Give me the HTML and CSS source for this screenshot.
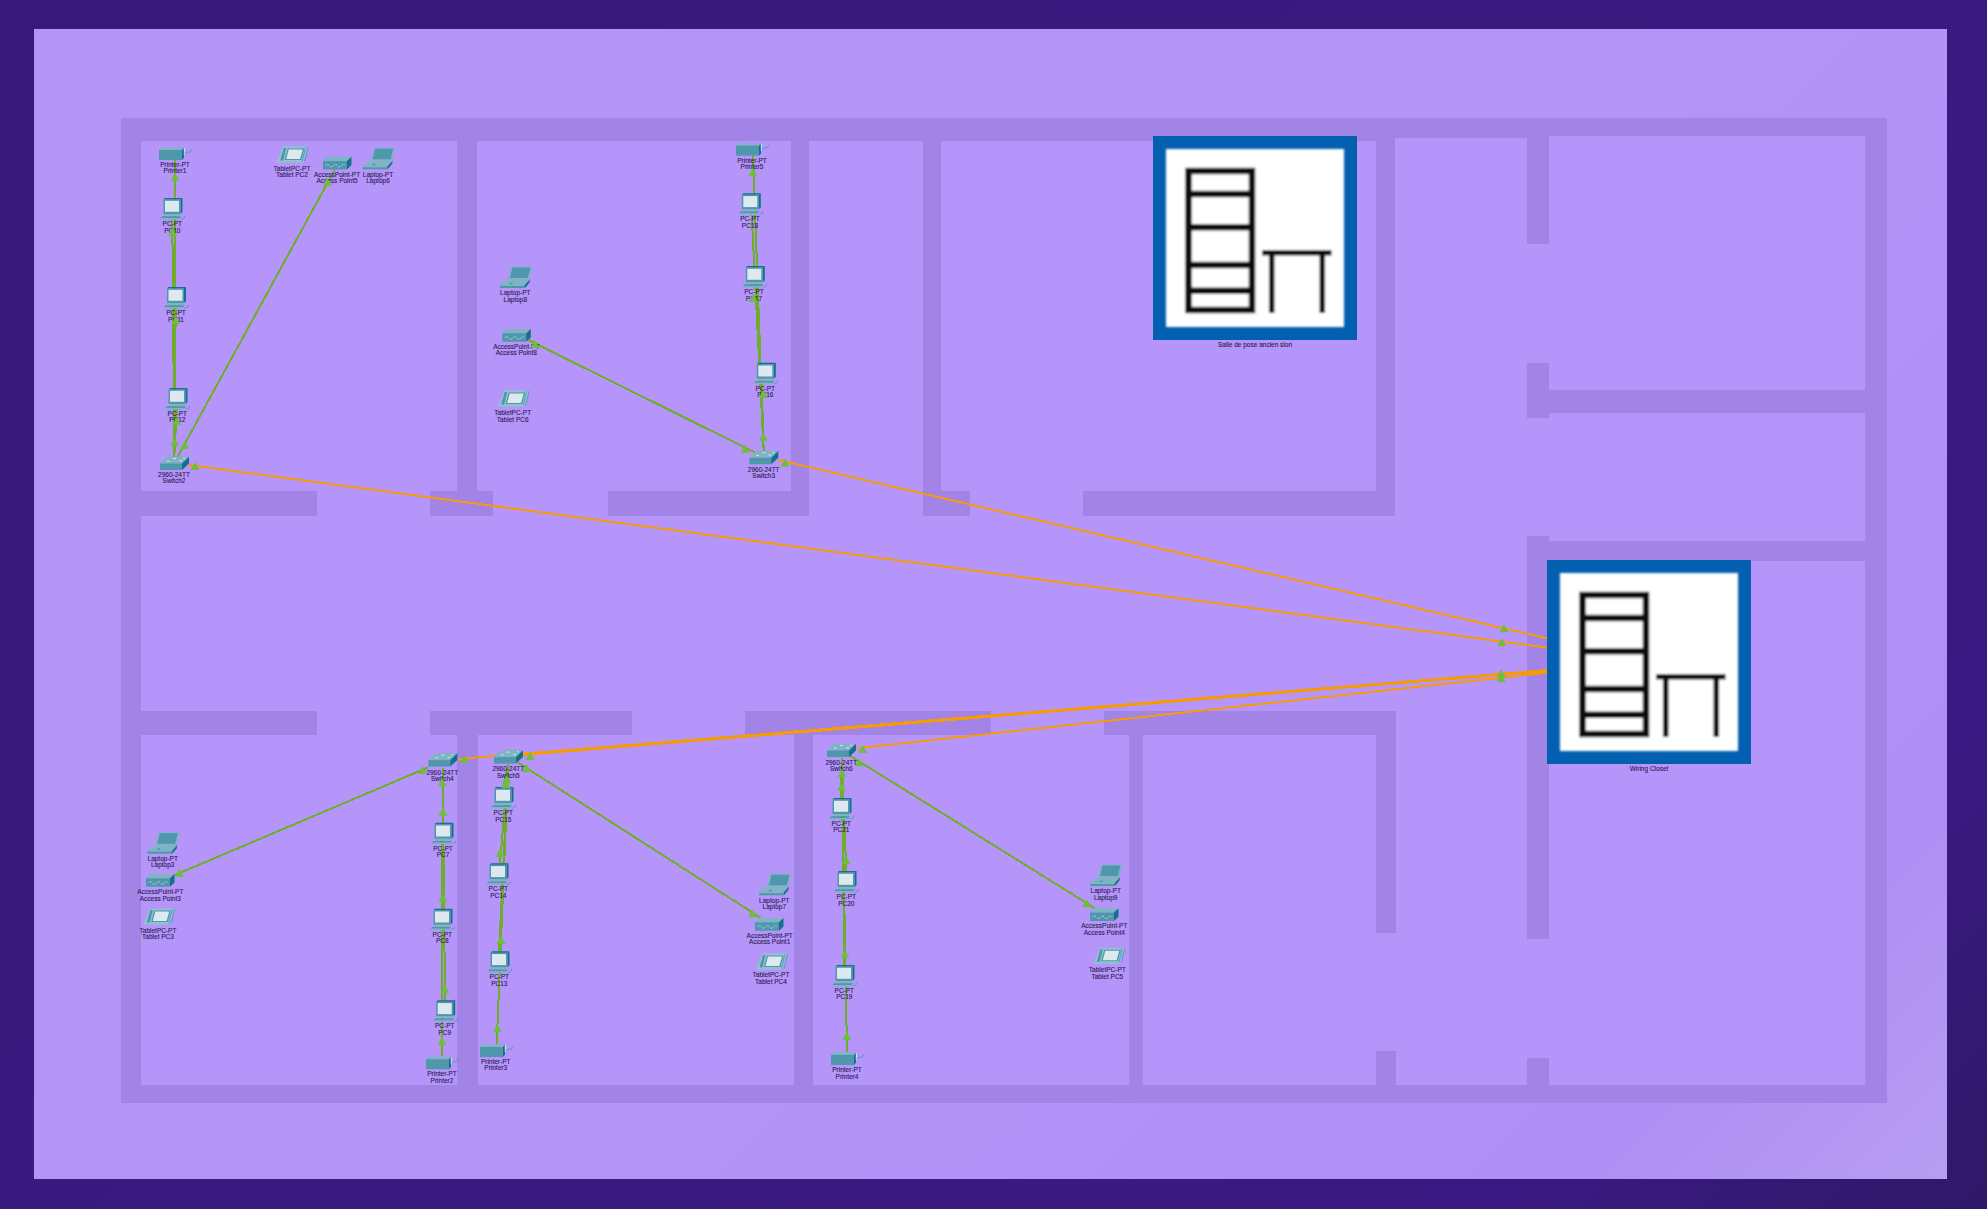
FILE: index.html
```html
<!DOCTYPE html>
<html lang="en">
<head>
<meta charset="utf-8">
<title>Physical workspace</title>
<link rel="stylesheet" href="styles.css">
</head>
<body>
<main class="canvas">
<svg class="plan" viewBox="34 29 1913 1150" width="1913" height="1150" xmlns="http://www.w3.org/2000/svg">
<defs>
  <filter id="soft" x="-5%" y="-5%" width="110%" height="110%"><feGaussianBlur stdDeviation="1.3"/></filter>
  <polygon id="tri" class="light" points="-4.5,4 0,-4 4.5,4"/>
  <g id="closet">
    <rect class="closet-frame" width="204" height="204"/>
    <g filter="url(#soft)">
      <rect class="closet-paper" x="13" y="13" width="178" height="178"/>
      <rect class="closet-ink" x="35.5" y="35" width="63.5" height="139"/>
      <path class="closet-ink" d="M35 58H99M35 91.3H99M35 129H99M35 154.7H99"/>
      <path class="closet-ink thin" d="M109 116.7H178.5M118.7 117V177M169.3 117V177"/>
    </g>
  </g>
  <g id="pc">
    <path class="teal-dark" d="M20.5 1.5L22.5 0V14L20.5 16Z"/>
    <path class="teal-dark" d="M3.5 1.5L5 0H22.5L20.5 1.5Z"/>
    <rect class="teal" x="3.5" y="1.5" width="17" height="14.5"/>
    <rect class="screen" x="5" y="2.8" width="14" height="11"/>
    <path class="teal-light" d="M4 16H20.5L19.5 18H5Z"/>
    <path class="teal" d="M2.5 18.3H21L19.8 20H0.5Z"/>
    <path class="teal-light" d="M0 20H20V21.5H0Z"/>
    <path class="tail" d="M21 21.5L24.5 19.5V17.8"/>
  </g>
  <g id="printer">
    <path class="teal-light" d="M0 3L2.5 0.5H24.5L23 3Z"/>
    <rect class="teal" x="0" y="3" width="23" height="10"/>
    <path class="teal-dark" d="M23 3L25 0.5V10.5L23 13Z"/>
    <path class="tail-white" d="M25.3 1V8"/>
    <path class="tail" d="M25.5 6.5L29 5L31 5.3L33 2"/>
  </g>
  <g id="switch">
    <path class="teal-light" d="M0 6.8L7.5 0H29L22 6.8Z"/>
    <rect class="teal" x="0" y="6.8" width="22" height="6.5"/>
    <path class="teal-dark" d="M22 6.8L29 0V6.8L22 13.3Z"/>
    <path class="marks" d="M7 4.5H9.5M13 1.8H16M19 4H22M23 1.5H25"/>
  </g>
  <g id="ap">
    <path class="teal-light" d="M0 4.3L3.5 0H28.5L24 4.3Z"/>
    <rect class="teal" x="0" y="4.3" width="24" height="8.4"/>
    <path class="teal-dark" d="M24 4.3L28.5 0V8.4L24 12.7Z"/>
    <path class="dots" d="M2.5 9Q4.5 6.5 6.5 9T10.5 9T14.5 9T18.5 9T22 9"/>
  </g>
  <g id="laptop">
    <path class="teal-light" d="M11.5 0.5H32.3L29 13H8Z"/>
    <path class="teal" d="M12.5 1.5H30.5L27.8 12H10Z"/>
    <path class="teal-light" d="M0 18.2L8.5 13.2H30L24 20H0Z"/>
    <path class="teal-dark" d="M24 20L30 13.2L29.5 16.5L25 22Z"/>
    <rect class="teal" x="0" y="20" width="25" height="2"/>
    <path class="teal" d="M9 17.5L11 16.5H13L12 18.5Z"/>
  </g>
  <g id="tablet">
    <path class="pale" d="M6.5 0.5H31L26.5 16.5H0Z"/>
    <path class="teal" d="M7 2L3.5 14.5H6.5L9.5 2Z"/>
    <path class="teal" d="M11 2.5H27.5L24.5 14H8Z"/>
    <path class="screen" d="M12 3.5H26L23.3 13H9.5Z"/>
    <path class="tail" d="M29 1L25.5 15.5M31.5 1L28 15.5"/>
  </g>
</defs>

<rect class="floor" x="121" y="118" width="1766" height="985"/>
<g class="walls">
  <rect x="121" y="118" width="1766" height="18"/><rect x="121" y="136" width="1274" height="5"/><rect x="1395" y="136" width="132" height="2"/>
  <rect x="121" y="118" width="20" height="985"/><rect x="1865" y="118" width="22" height="985"/><rect x="121" y="1085" width="1766" height="18"/>
  <rect x="457" y="141" width="20" height="375"/><rect x="791" y="141" width="18" height="375"/><rect x="923" y="141" width="18" height="375"/><rect x="1376" y="141" width="19" height="375"/>
  <rect x="141" y="491" width="176" height="25"/><rect x="430" y="491" width="63" height="25"/><rect x="608" y="491" width="201" height="25"/><rect x="923" y="491" width="47" height="25"/><rect x="1083" y="491" width="312" height="25"/>
  <rect x="1527" y="118" width="22" height="126"/><rect x="1527" y="363" width="22" height="55"/><rect x="1527" y="536" width="22" height="403"/><rect x="1527" y="1058" width="22" height="27"/>
  <rect x="1549" y="390" width="316" height="23"/><rect x="1549" y="541" width="316" height="20"/>
  <rect x="141" y="711" width="176" height="24"/><rect x="430" y="711" width="202" height="24"/><rect x="745" y="711" width="246" height="24"/><rect x="1104" y="711" width="292" height="24"/>
  <rect x="457" y="711" width="21" height="374"/><rect x="794" y="711" width="19" height="374"/><rect x="1129" y="735" width="14" height="350"/><rect x="1376" y="711" width="20" height="222"/><rect x="1376" y="1051" width="20" height="34"/>
</g>

<g class="fiber">
  <line x1="778.3" y1="460" x2="1547" y2="638.3"/>
  <line x1="189" y1="465" x2="1547" y2="647.7"/>
  <line x1="523" y1="754" x2="1547" y2="670"/>
  <line x1="523" y1="755" x2="1547" y2="671"/>
  <line x1="458" y1="759" x2="1547" y2="670"/>
  <line x1="857" y1="748.3" x2="1547" y2="672.7"/>
</g>
<g class="copper">
  <line x1="175" y1="160" x2="174.3" y2="456.7"/>
  <line x1="172.3" y1="220" x2="174.3" y2="456.7"/>
  <line x1="175.7" y1="308" x2="174.3" y2="456.7"/>
  <line x1="176.7" y1="409" x2="174.3" y2="456.7"/>
  <line x1="335" y1="169.3" x2="177.7" y2="456.7"/>
  <line x1="753" y1="155.3" x2="763.7" y2="451"/>
  <line x1="751.7" y1="215" x2="763.7" y2="451"/>
  <line x1="755.7" y1="287.7" x2="763.7" y2="451"/>
  <line x1="761.7" y1="384" x2="763.7" y2="451"/>
  <line x1="528.3" y1="340" x2="756.7" y2="453.3"/>
  <line x1="442" y1="1056.3" x2="442.7" y2="767.7"/>
  <line x1="445" y1="1000.3" x2="442.7" y2="767.7"/>
  <line x1="442.3" y1="908.7" x2="442.7" y2="767.7"/>
  <line x1="443" y1="822.7" x2="442.7" y2="767.7"/>
  <line x1="175" y1="875" x2="428.3" y2="767.3"/>
  <line x1="496.7" y1="1044" x2="508.3" y2="764.3"/>
  <line x1="499" y1="951.3" x2="508.3" y2="764.3"/>
  <line x1="500" y1="863.3" x2="508.3" y2="764.3"/>
  <line x1="503.3" y1="787" x2="508.3" y2="764.3"/>
  <line x1="518.3" y1="762.7" x2="760" y2="917.3"/>
  <line x1="847" y1="1052" x2="841.7" y2="757.7"/>
  <line x1="844.3" y1="965" x2="841.7" y2="757.7"/>
  <line x1="846.3" y1="871" x2="841.7" y2="757.7"/>
  <line x1="841.3" y1="798" x2="841.7" y2="757.7"/>
  <line x1="850" y1="755.7" x2="1095" y2="908.3"/>
</g>

<use href="#printer" x="159" y="147"/><text class="label" x="175" y="166.6">Printer-PT</text><text class="label" x="175" y="173">Printer1</text>
<use href="#pc" x="160" y="198"/><text class="label" x="172.3" y="225.6">PC-PT</text><text class="label" x="172.3" y="232.6">PC10</text>
<use href="#pc" x="163.5" y="287"/><text class="label" x="176" y="314.6">PC-PT</text><text class="label" x="176" y="321.6">PC11</text>
<use href="#pc" x="165" y="388"/><text class="label" x="177.3" y="415.6">PC-PT</text><text class="label" x="177.3" y="421.6">PC12</text>
<use href="#switch" x="160" y="456.7"/><text class="label" x="174" y="477">2960-24TT</text><text class="label" x="174" y="483.3">Switch2</text>
<use href="#tablet" x="276.7" y="146"/><text class="label" x="292" y="170.6">TabletPC-PT</text><text class="label" x="292" y="176.6">Tablet PC2</text>
<use href="#ap" x="323" y="156.7"/><text class="label" x="337" y="176.6">AccessPoint-PT</text><text class="label" x="337" y="182.6">Access Point5</text>
<use href="#laptop" x="362.7" y="147.3"/><text class="label" x="378" y="176.6">Laptop-PT</text><text class="label" x="378" y="182.6">Laptop6</text>

<use href="#printer" x="736" y="142.7"/><text class="label" x="752" y="162.6">Printer-PT</text><text class="label" x="752" y="168.6">Printer5</text>
<use href="#pc" x="738.3" y="193.3"/><text class="label" x="750" y="221">PC-PT</text><text class="label" x="750" y="228">PC18</text>
<use href="#pc" x="742.3" y="266"/><text class="label" x="754" y="293.6">PC-PT</text><text class="label" x="754" y="300.6">PC17</text>
<use href="#pc" x="753.3" y="362.7"/><text class="label" x="765.3" y="390.6">PC-PT</text><text class="label" x="765.3" y="396.6">PC16</text>
<use href="#switch" x="749.3" y="451"/><text class="label" x="763.7" y="472">2960-24TT</text><text class="label" x="763.7" y="478">Switch3</text>
<use href="#laptop" x="500" y="266"/><text class="label" x="515.3" y="294.6">Laptop-PT</text><text class="label" x="515.3" y="301.6">Laptop8</text>
<use href="#ap" x="502.3" y="329"/><text class="label" x="516.3" y="348.6">AccessPoint-PT</text><text class="label" x="516.3" y="354.6">Access Point8</text>
<use href="#tablet" x="497.7" y="390"/><text class="label" x="512.7" y="414.6">TabletPC-PT</text><text class="label" x="512.7" y="421.6">Tablet PC6</text>

<use href="#switch" x="428.3" y="753.3"/><text class="label" x="442.3" y="774.6">2960-24TT</text><text class="label" x="442.3" y="780.6">Switch4</text>
<use href="#pc" x="431" y="822.7"/><text class="label" x="443" y="850.6">PC-PT</text><text class="label" x="443" y="856.6">PC7</text>
<use href="#pc" x="430" y="908.7"/><text class="label" x="442.3" y="936.6">PC-PT</text><text class="label" x="442.3" y="942.6">PC8</text>
<use href="#pc" x="432.7" y="1000.3"/><text class="label" x="444.7" y="1027.6">PC-PT</text><text class="label" x="444.7" y="1034.6">PC9</text>
<use href="#printer" x="426" y="1056.3"/><text class="label" x="442" y="1075.6">Printer-PT</text><text class="label" x="442" y="1082.6">Printer2</text>
<use href="#laptop" x="147.3" y="831.7"/><text class="label" x="162.7" y="860.6">Laptop-PT</text><text class="label" x="162.7" y="866.6">Laptop3</text>
<use href="#ap" x="146" y="874"/><text class="label" x="160.3" y="893.6">AccessPoint-PT</text><text class="label" x="160.3" y="900.6">Access Point3</text>
<use href="#tablet" x="143.3" y="908"/><text class="label" x="158" y="932.6">TabletPC-PT</text><text class="label" x="158" y="938.6">Tablet PC3</text>

<use href="#switch" x="494" y="750.3"/><text class="label" x="508.3" y="770.6">2960-24TT</text><text class="label" x="508.3" y="777.6">Switch5</text>
<use href="#pc" x="491" y="787"/><text class="label" x="503.3" y="814.6">PC-PT</text><text class="label" x="503.3" y="821.6">PC15</text>
<use href="#pc" x="486" y="863.3"/><text class="label" x="498.3" y="890.6">PC-PT</text><text class="label" x="498.3" y="897.6">PC14</text>
<use href="#pc" x="487" y="951.3"/><text class="label" x="499.3" y="978.6">PC-PT</text><text class="label" x="499.3" y="985.6">PC13</text>
<use href="#printer" x="480" y="1044"/><text class="label" x="495.7" y="1063.6">Printer-PT</text><text class="label" x="495.7" y="1069.6">Printer3</text>
<use href="#laptop" x="759" y="873.3"/><text class="label" x="774.3" y="902.6">Laptop-PT</text><text class="label" x="774.3" y="908.6">Laptop7</text>
<use href="#ap" x="755" y="918"/><text class="label" x="769.7" y="937.6">AccessPoint-PT</text><text class="label" x="769.7" y="943.6">Access Point1</text>
<use href="#tablet" x="756" y="953"/><text class="label" x="771" y="976.6">TabletPC-PT</text><text class="label" x="771" y="983.6">Tablet PC4</text>

<use href="#switch" x="827" y="743.7"/><text class="label" x="841.3" y="764.6">2960-24TT</text><text class="label" x="841.3" y="770.6">Switch6</text>
<use href="#pc" x="829" y="798"/><text class="label" x="841.3" y="825.6">PC-PT</text><text class="label" x="841.3" y="831.6">PC21</text>
<use href="#pc" x="834" y="871"/><text class="label" x="846.3" y="898.6">PC-PT</text><text class="label" x="846.3" y="905.6">PC20</text>
<use href="#pc" x="832" y="965"/><text class="label" x="844.3" y="992.6">PC-PT</text><text class="label" x="844.3" y="998.6">PC19</text>
<use href="#printer" x="831" y="1052"/><text class="label" x="847" y="1071.6">Printer-PT</text><text class="label" x="847" y="1078.6">Printer4</text>
<use href="#laptop" x="1090" y="864"/><text class="label" x="1105.7" y="892.6">Laptop-PT</text><text class="label" x="1105.7" y="899.6">Laptop9</text>
<use href="#ap" x="1090" y="908.3"/><text class="label" x="1104.3" y="927.6">AccessPoint-PT</text><text class="label" x="1104.3" y="934.6">Access Point4</text>
<use href="#tablet" x="1093.3" y="947.3"/><text class="label" x="1107.3" y="971.6">TabletPC-PT</text><text class="label" x="1107.3" y="978.6">Tablet PC5</text>

<use href="#closet" x="1153" y="136"/><text class="label" x="1255" y="347">Salle de pose ancien sion</text>
<use href="#closet" x="1547" y="560"/><text class="label" x="1649" y="770.6">Wiring Closet</text>

<g>
  <use href="#tri" x="175" y="176.7"/><use href="#tri" x="172.7" y="231.7"/><use href="#tri" x="175.7" y="320"/><use href="#tri" x="176.7" y="421"/><use href="#tri" x="174.7" y="441.7"/><use href="#tri" x="184.7" y="445"/><use href="#tri" x="195" y="466"/><use href="#tri" x="327.3" y="181.7"/>
  <use href="#tri" x="752.7" y="172.3"/><use href="#tri" x="753.3" y="298"/><use href="#tri" x="763.3" y="394"/><use href="#tri" x="763.3" y="436.7"/><use href="#tri" x="745" y="449"/><use href="#tri" x="785" y="462.7"/><use href="#tri" x="535" y="344"/>
  <use href="#tri" x="422.7" y="770"/><use href="#tri" x="464" y="759"/><use href="#tri" x="442.3" y="782.3"/><use href="#tri" x="443" y="811.7"/><use href="#tri" x="443" y="897.7"/><use href="#tri" x="445" y="989.3"/><use href="#tri" x="442" y="1040.7"/><use href="#tri" x="179.3" y="872.7"/>
  <use href="#tri" x="500" y="852.7"/><use href="#tri" x="501" y="940"/><use href="#tri" x="497.3" y="1028.3"/><use href="#tri" x="506.7" y="779.3"/><use href="#tri" x="506" y="784"/><use href="#tri" x="530" y="756"/><use href="#tri" x="526.7" y="768.3"/><use href="#tri" x="752.3" y="913.3"/>
  <use href="#tri" x="841.7" y="786.7"/><use href="#tri" x="842" y="773"/><use href="#tri" x="846" y="860"/><use href="#tri" x="845" y="954"/><use href="#tri" x="846.7" y="1036"/><use href="#tri" x="862.7" y="749"/><use href="#tri" x="859.3" y="762.3"/><use href="#tri" x="1086.7" y="903.3"/>
  <use href="#tri" x="1504" y="628.3"/><use href="#tri" x="1501.7" y="642.3"/><use href="#tri" x="1501" y="673.3"/><use href="#tri" x="1501" y="678.3"/>
</g>
</svg>
</main>
</body>
</html>
```

FILE: styles.css
```css
html, body {
  margin: 0;
  height: 100%;
}

body {
  display: flex;
  align-items: flex-start;
  width: 1987px;
  height: 1209px;
  padding: 29px 40px 30px 34px;
  box-sizing: border-box;
  overflow: hidden;
  background: linear-gradient(135deg, #37197a 0%, #3a1a82 85%, #2f1868 100%);
}

.canvas {
  width: 1913px;
  height: 1150px;
  background: linear-gradient(135deg, #b295f6 0%, #b395f8 55%, #ae8ff4 88%, #b89df2 100%);
}

.plan {
  display: block;
}

.floor {
  fill: #b595fa;
}

.walls rect {
  fill: #a283e6;
}

.fiber line,
.copper line {
  fill: none;
  shape-rendering: crispEdges;
}

.fiber line {
  stroke: #f69b08;
  stroke-width: 2;
}

.copper line {
  stroke: #6fae28;
  stroke-width: 2;
}

.light {
  fill: #6fbd3d;
}

.label {
  font-family: "Liberation Sans", Arial, sans-serif;
  font-size: 6.5px;
  text-anchor: middle;
  fill: #2a1b50;
  stroke: #2a1b50;
  stroke-width: 0.1;
}

.closet-frame {
  fill: #0360b0;
}

.closet-paper {
  fill: #ffffff;
}

.closet-ink {
  fill: none;
  stroke: #111111;
  stroke-width: 6.5;
}

.closet-ink.thin {
  stroke-width: 5.5;
}

.teal { fill: #4f97ad; }
.teal-light { fill: #7eb5c2; }
.teal-dark { fill: #14708a; }
.pale { fill: #8fc3cf; }
.screen { fill: #dde9ee; }

.tail {
  fill: none;
  stroke: #4f9db5;
  stroke-width: 0.9;
}

.tail-white {
  fill: none;
  stroke: #e4f2f5;
  stroke-width: 0.9;
}

.marks {
  fill: none;
  stroke: #e8f3f5;
  stroke-width: 0.8;
}

.dots {
  fill: none;
  stroke: #e6f2f5;
  stroke-width: 0.9;
  stroke-dasharray: 0.9 0.9;
}
```
